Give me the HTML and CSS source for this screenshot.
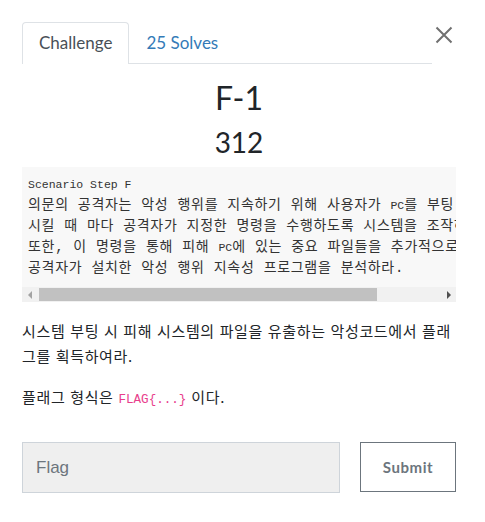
FILE: index.html
```html
<!DOCTYPE html>
<html lang="ko">

<head>
    <meta charset="UTF-8">
    <meta name="viewport" content="width=device-width, initial-scale=1.0">
    <title>F-1</title>
    <link rel="stylesheet" href="styles.css">
</head>

<body>

    <div class="modal">
        <div class="modal-head">
            <ul class="tabs">
                <li class="tab active">Challenge</li>
                <li class="tab">25 Solves</li>
            </ul>
            <button class="close" aria-label="Close">
                <svg width="18" height="18" viewBox="0 0 18 18">
                    <path d="M1.5 1.5 L16.5 16.5 M16.5 1.5 L1.5 16.5" stroke="#707070" stroke-width="2" fill="none"/>
                </svg>
            </button>
        </div>

        <h2 class="title">F-1</h2>
        <h3 class="value">312</h3>

        <div class="code-box">
            <pre class="desc"><span class="latin">Scenario Step F</span>
의문의 공격자는 악성 행위를 지속하기 위해 사용자가 <span class="latin">PC</span>를 부팅 시 악성코드가 실행되도록 하였다.
시킬 때 마다 공격자가 지정한 명령을 수행하도록 시스템을 조작하였다.
또한, 이 명령을 통해 피해 <span class="latin">PC</span>에 있는 중요 파일들을 추가적으로 유출하였다.
공격자가 설치한 악성 행위 지속성 프로그램을 분석하라.</pre>
            <div class="scrollbar">
                <span class="arrow left"></span>
                <div class="track"><div class="thumb"></div></div>
                <span class="arrow right"></span>
            </div>
        </div>

        <p class="text">시스템 부팅 시 피해 시스템의 파일을 유출하는 악성코드에서 플래그를 획득하여라.</p>
        <p class="text">플래그 형식은 <code>FLAG{...}</code> 이다.</p>

        <div class="submit-row">
            <input type="text" class="flag-input" placeholder="Flag">
            <button class="submit">Submit</button>
        </div>
    </div>

</body>

</html>
```

FILE: styles.css
```css
body {
    margin: 0;
    background-color: #ffffff;
    font-family: Lato, "Noto Sans CJK KR", sans-serif;
    color: #212529;
}

.modal {
    width: 434px;
    padding: 22px 0 0 22px;
}

.modal-head {
    display: flex;
    align-items: flex-start;
}

.tabs {
    flex: 1;
    display: flex;
    list-style: none;
    margin: 0;
    padding: 0;
    border-bottom: 1px solid #dee2e6;
}

.tab {
    padding: 8px 16px;
    font-size: 17px;
    line-height: 24px;
    color: #337ab7;
    border: 1px solid transparent;
    border-bottom: none;
    margin-bottom: -1px;
    border-radius: 4px 4px 0 0;
}

.tab.active {
    color: #495057;
    background-color: #fff;
    border-color: #dee2e6;
    padding-bottom: 9px;
}

.close {
    background: none;
    border: none;
    padding: 0;
    margin: 1px 0 0 0;
    width: 24px;
    height: 24px;
    display: flex;
    align-items: center;
    justify-content: center;
    cursor: pointer;
}

.title {
    text-align: center;
    font-size: 32px;
    font-weight: 400;
    line-height: 38px;
    margin: 15px 0 0 0;
}

.value {
    text-align: center;
    font-size: 28px;
    font-weight: 400;
    line-height: 34px;
    margin: 8px 0 8px 0;
}

.code-box {
    background-color: #f8f8f8;
}

.desc {
    margin: 0;
    padding: 7px 6px 8px 6px;
    font-family: "Liberation Mono", "Noto Sans CJK KR", monospace;
    font-size: 14px;
    letter-spacing: 0.7px;
    line-height: 21px;
    color: #333;
    overflow: hidden;
    white-space: pre;
}

.latin {
    font-size: 11.5px;
    letter-spacing: 0;
}

.scrollbar {
    display: flex;
    height: 15px;
    background-color: #f1f1f1;
}

.arrow {
    width: 15px;
    display: flex;
    align-items: center;
    justify-content: center;
}

.arrow::before {
    content: "";
    border-top: 4px solid transparent;
    border-bottom: 4px solid transparent;
}

.arrow.left::before {
    border-right: 4px solid #a3a3a3;
}

.arrow.right::before {
    border-left: 4px solid #505050;
}

.track {
    flex: 1;
    padding: 1px 0 1px 2px;
}

.thumb {
    width: 338px;
    height: 13px;
    background-color: #c1c1c1;
}

.text {
    font-family: "Noto Sans CJK KR", sans-serif;
    font-size: 15px;
    letter-spacing: 0.65px;
    line-height: 25px;
    margin: 16px 0 15px 0;
}

code {
    font-family: "Liberation Mono", monospace;
    font-size: 12.6px;
    letter-spacing: 0;
    color: #e83e8c;
}

.submit-row {
    display: flex;
    gap: 20px;
    margin-top: 29px;
}

.flag-input {
    width: 318px;
    height: 51px;
    box-sizing: border-box;
    padding: 0 13px;
    font-family: "Liberation Sans", Arial, sans-serif;
    font-size: 17px;
    background-color: #efefef;
    border: 1px solid #ced4da;
    color: #495057;
}

.flag-input::placeholder {
    color: #6c757d;
}

.submit {
    width: 96px;
    height: 50px;
    background-color: #fff;
    border: 1px solid #6c757d;
    color: #6c757d;
    font-family: Lato, sans-serif;
    font-weight: 700;
    font-size: 15px;
    letter-spacing: 0.6px;
    cursor: pointer;
}
```
